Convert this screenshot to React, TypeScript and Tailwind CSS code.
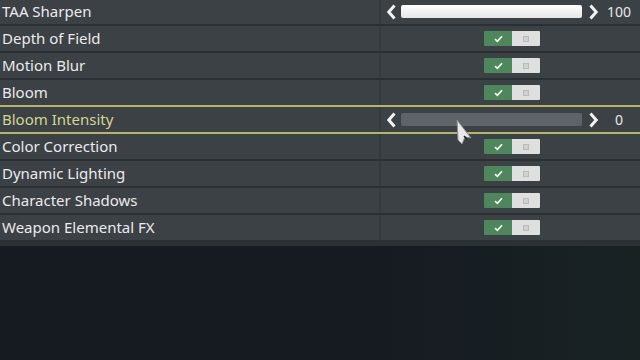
import React from "react";

type Row =
  | { label: string; kind: "toggle" }
  | { label: string; kind: "slider"; value: number; active?: boolean };

const rows: Row[] = [
  { label: "TAA Sharpen", kind: "slider", value: 100 },
  { label: "Depth of Field", kind: "toggle" },
  { label: "Motion Blur", kind: "toggle" },
  { label: "Bloom", kind: "toggle" },
  { label: "Bloom Intensity", kind: "slider", value: 0, active: true },
  { label: "Color Correction", kind: "toggle" },
  { label: "Dynamic Lighting", kind: "toggle" },
  { label: "Character Shadows", kind: "toggle" },
  { label: "Weapon Elemental FX", kind: "toggle" },
];

const Chevron = ({ dir }: { dir: "left" | "right" }) => (
  <svg width="11" height="16" viewBox="0 0 11 16">
    <path
      d={dir === "left" ? "M8.5 1.5 L2.8 8 L8.5 14.5" : "M2.5 1.5 L8.2 8 L2.5 14.5"}
      fill="none"
      stroke="#f2f2f2"
      strokeWidth="3"
    />
  </svg>
);

const Toggle = () => (
  <div className="flex h-[15px] w-[56px] overflow-hidden rounded-[1px]">
    <div className="flex w-[28px] items-center justify-center bg-[#4f875c]">
      <svg width="9" height="8" viewBox="0 0 9 8">
        <path d="M1 4.2 L3.4 6.4 L8 1.3" fill="none" stroke="#f4f8f4" strokeWidth="1.7" />
      </svg>
    </div>
    <div className="flex flex-1 items-center justify-center bg-[#dedfdf]">
      <div className="h-[6px] w-[6px] border border-[#b9babb] bg-[#cfd0d0]" />
    </div>
  </div>
);

const Slider = ({ value, active }: { value: number; active?: boolean }) => (
  <div className="flex items-center">
    <div className="ml-[5px] flex w-[11px] justify-center">
      <Chevron dir="left" />
    </div>
    <div
      className={
        "ml-[4px] h-[13px] w-[181px] rounded-[2px] " +
        (active ? "bg-[#5d6368]" : "bg-gradient-to-b from-[#ffffff] to-[#e6e6e6]")
      }
    />
    <div className="ml-[6px] flex w-[11px] justify-center">
      <Chevron dir="right" />
    </div>
    <div className="ml-[4px] w-[32px] text-center text-[14px] text-[#e8e8e8]">{value}</div>
  </div>
);

export default function App() {
  return (
    <div
      className="relative h-[360px] w-[640px] overflow-hidden bg-[#161b22]"
      style={{ fontFamily: '"Noto Sans", "Open Sans", sans-serif' }}
    >
      <div className="pointer-events-none absolute right-0 top-[240px] h-[120px] w-[260px] bg-gradient-to-l from-[#1a2724] to-transparent opacity-60" />
      <div className="relative -mt-[1px] flex flex-col">
        {rows.map((r, i) => {
          const active = r.kind === "slider" && r.active;
          return (
            <div
              key={i}
              className={
                "flex h-[27px] border-b-2 bg-[#3c4146] " +
                (active || i === 3 ? "border-[#b3b66a]" : "border-[#2b3035]")
              }
            >
              <div
                className={
                  "flex w-[379px] items-center pl-[2px] text-[15px] " +
                  (active ? "text-[#d3d68c]" : "text-[#ebebeb]")
                }
              >
                {r.label}
              </div>
              <div className="w-[2px] bg-[#353a3f]" />
              <div className="flex flex-1 items-center">
                {r.kind === "toggle" ? (
                  <div className="ml-[103px]">
                    <Toggle />
                  </div>
                ) : (
                  <Slider value={r.value} active={r.active} />
                )}
              </div>
            </div>
          );
        })}
        <div className="h-[4px] bg-[#2c3136]" />
      </div>
      <svg
        className="absolute left-[455px] top-[119px]"
        width="18"
        height="26"
        viewBox="0 0 18 26"
      >
        <path d="M2 1 L16 19 L10 18 L7 25 L3 21 Z" fill="#e9e9e9" stroke="#8a8a8a" strokeWidth="1" />
        <path d="M9 17 L12 20" stroke="#222" strokeWidth="1.5" />
      </svg>
    </div>
  );
}
